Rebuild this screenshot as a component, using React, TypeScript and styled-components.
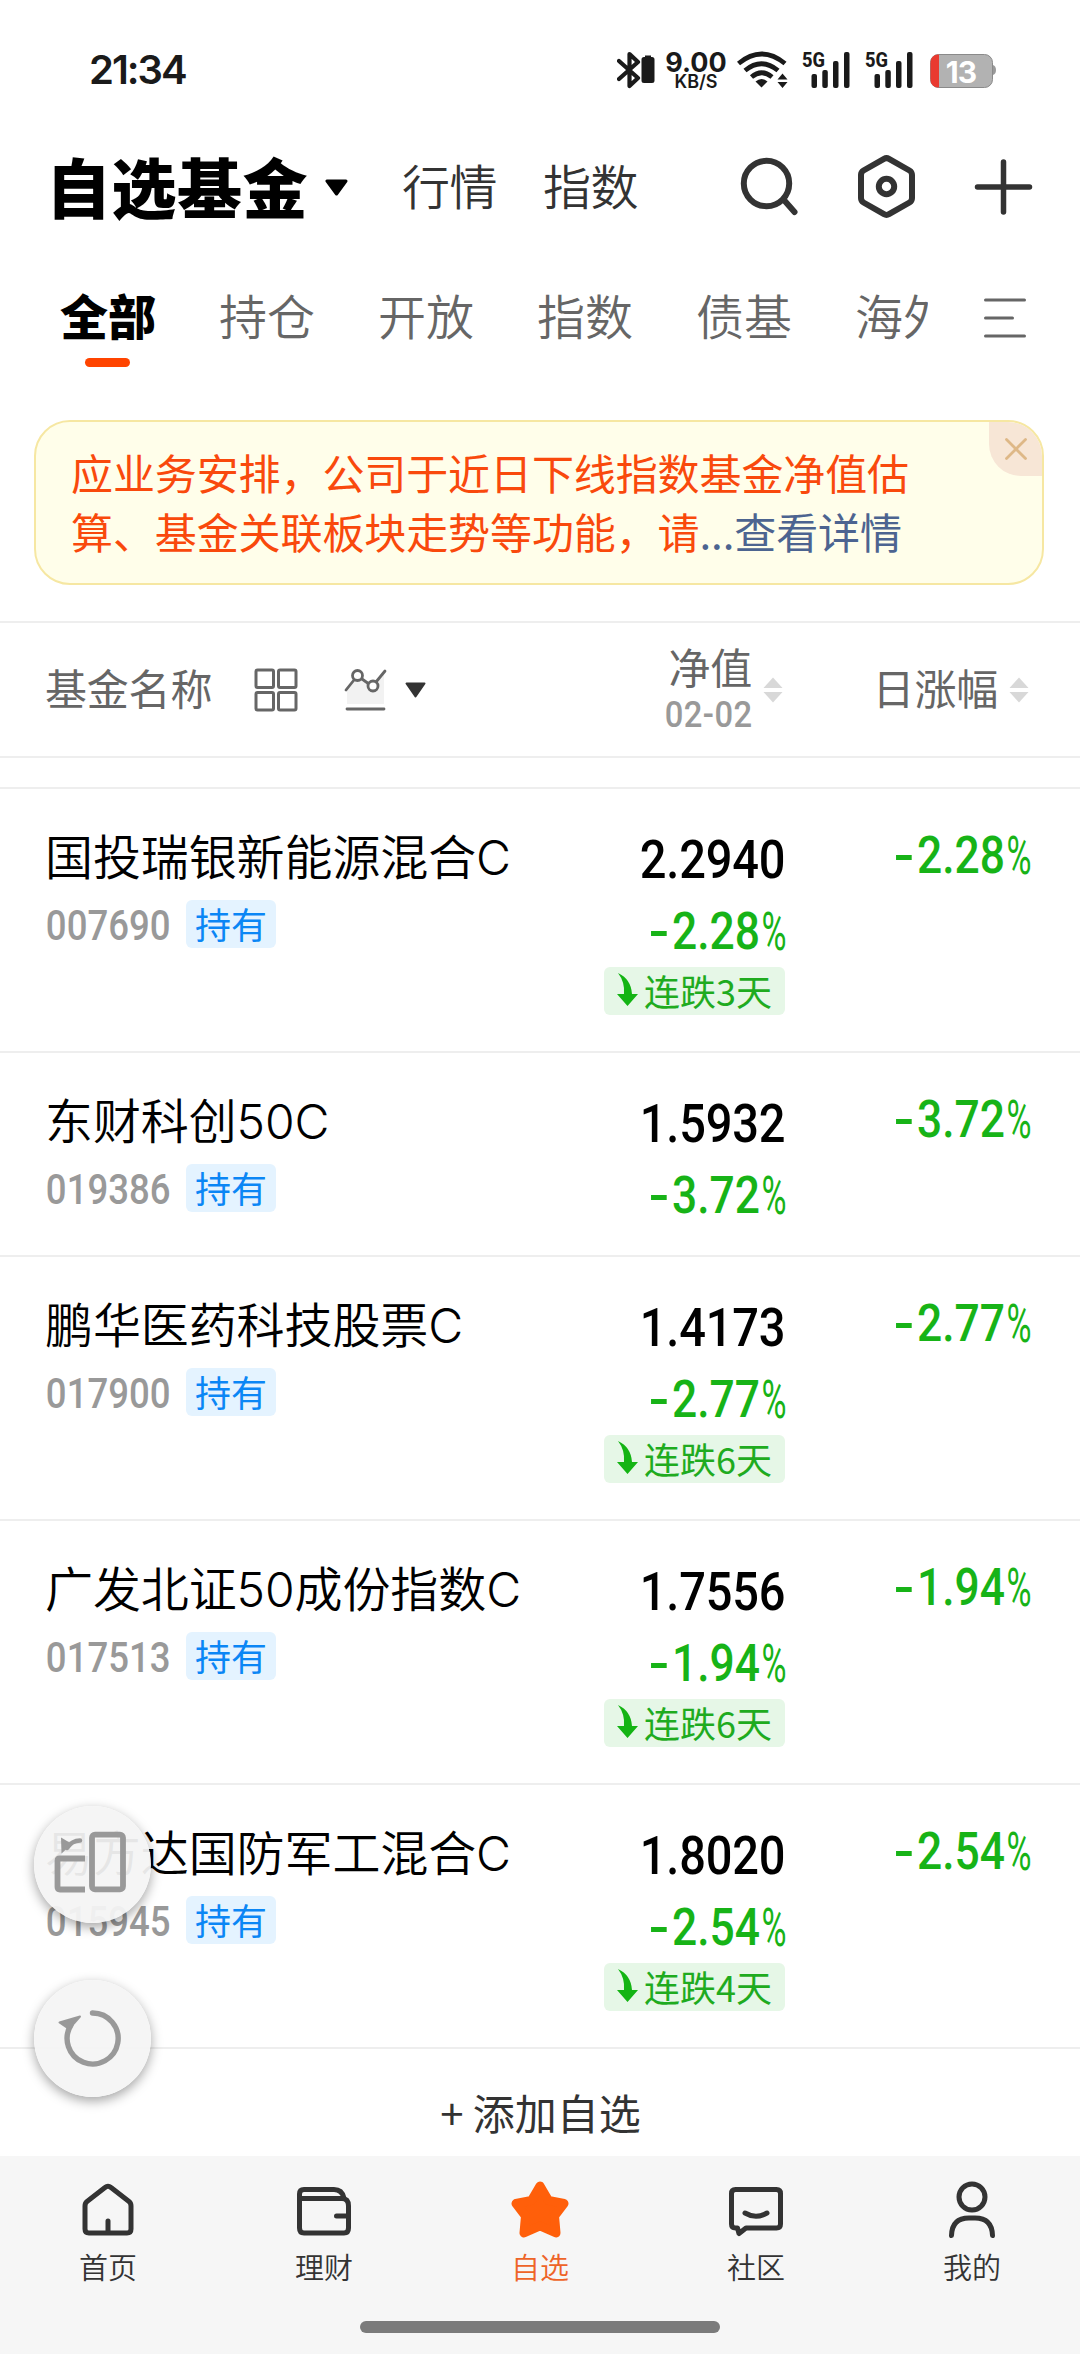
import React from "react";
import styled, { createGlobalStyle, css } from "styled-components";

const CJK = `"Noto Sans CJK SC", sans-serif`;
const NUM = `Roboto, "Liberation Sans", sans-serif`;

const Global = createGlobalStyle`
  * { box-sizing: border-box; }
  html, body { margin: 0; padding: 0; background: #fff; }
  body { font-family: ${CJK}; color: #000; overflow: hidden; }
`;

const Page = styled.div`
  width: 1080px;
  height: 2354px;
  display: flex;
  flex-direction: column;
  background: #fff;
  position: relative;
  overflow: hidden;
`;

const StatusBar = styled.div`
  height: 140px;
  flex: none;
  display: flex;
  justify-content: space-between;
  padding: 50px 84px 0 89px;
`;
const Clock = styled.div`
  font: 600 40px/40px Inter, sans-serif;
  letter-spacing: -2px;
  color: #1a1a1a;
`;
const StatusIcons = styled.div`
  display: flex;
  height: 40px;
  align-items: center;
`;
const Speed = styled.div`
  width: 60px;
  margin: 2px 11px 0 11px;
  display: flex;
  flex-direction: column;
  align-items: center;
  font-family: Inter, sans-serif;
  color: #1a1a1a;
`;
const SpeedValue = styled.span`
  font-size: 27px;
  font-weight: 700;
  line-height: 21px;
`;
const SpeedUnit = styled.span`
  font-size: 18px;
  font-weight: 600;
  line-height: 18px;
`;

const TitleBar = styled.div`
  height: 94px;
  flex: none;
  display: flex;
  align-items: center;
  padding: 0 46px 0 46px;
`;
const Title = styled.div`
  font-size: 65px;
  line-height: 90px;
  font-weight: 800;
  letter-spacing: 0.5px;
  width: 279px;
  padding-bottom: 4px;
  white-space: nowrap;
`;
const TitleArrow = styled.svg`
  margin-right: 54px;
`;
const TitleLink = styled.div`
  font-size: 48px;
  line-height: 72px;
  font-weight: 350;
  letter-spacing: -0.4px;
  padding-bottom: 6px;
  color: #333;
  width: 141px;
  white-space: nowrap;
`;
const TitleIcons = styled.div`
  margin-left: auto;
  display: flex;
  gap: 57px;
`;

const TabRow = styled.div`
  height: 160px;
  flex: none;
  display: flex;
  padding: 44px 54px 0 60px;
`;
const TabStrip = styled.div`
  width: 868px;
  overflow: hidden;
  display: flex;
  gap: 63px;
`;
const Tab = styled.div<{ $active?: boolean }>`
  flex: none;
  width: 96px;
  display: flex;
  flex-direction: column;
  align-items: center;
  font-size: 48px;
  line-height: 72px;
  white-space: nowrap;
  color: ${(p) => (p.$active ? "#000" : "#666")};
  font-weight: ${(p) => (p.$active ? 800 : 350)};
  &::after {
    content: "";
    width: 45px;
    height: 9px;
    margin: 8px 1px 0 0;
    border-radius: 5px;
    background: ${(p) => (p.$active ? "#ff4400" : "transparent")};
  }
`;
const MenuButton = styled.div`
  margin: 20px 0 0 auto;
`;

const Notice = styled.div`
  flex: none;
  margin: 26px 36px 0 34px;
  height: 165px;
  border: 2px solid #f6e7a2;
  border-radius: 36px;
  background: #fffeea;
  position: relative;
  overflow: hidden;
  padding: 21px 0 0 35px;
  color: #f9490c;
  font-size: 42px;
  line-height: 58.5px;
  letter-spacing: -0.1px;
  white-space: nowrap;
`;
const NoticeLink = styled.span`
  color: #4c6490;
`;
const NoticeClose = styled.div`
  position: absolute;
  right: 0;
  top: 0;
  width: 53px;
  height: 54px;
  border-bottom-left-radius: 32px;
  background: #f7e6d6;
  display: flex;
  align-items: center;
  justify-content: center;
`;

const TableHead = styled.div`
  flex: none;
  margin-top: 36px;
  height: 137px;
  border-top: 2px solid #eee;
  border-bottom: 2px solid #eee;
  display: flex;
  align-items: center;
  padding: 0 51px 0 45px;
  color: #666;
  font-size: 42px;
  line-height: 46px;
  letter-spacing: -0.2px;
`;
const HeadName = styled.div`
  width: 209px;
  padding-bottom: 5px;
`;
const HeadChart = styled.div`
  margin: 0 18px 0 45px;
  display: flex;
`;
const HeadNav = styled.div`
  margin-left: auto;
  width: 130px;
  display: flex;
  flex-direction: column;
  align-items: flex-end;
  padding-bottom: 4px;
`;
const HeadChange = styled.div`
  margin-left: 85px;
  width: 130px;
  text-align: right;
  padding-bottom: 5px;
`;
const SortWrap = styled.div`
  display: flex;
  margin-left: 11px;
`;

const Spacer = styled.div`
  flex: none;
  height: 31px;
  border-bottom: 2px solid #eee;
`;

const Row = styled.div<{ $tall: boolean }>`
  flex: none;
  height: ${(p) => (p.$tall ? 264 : 204)}px;
  border-bottom: 2px solid #eee;
  display: grid;
  grid-template-columns: 1fr 245px 245px;
  padding: 0 50px 0 45px;
`;
const NameCell = styled.div`
  padding-top: 33px;
`;
const FundName = styled.div`
  font-family: Inter, ${CJK};
  font-size: 48px;
  line-height: 72px;
  letter-spacing: -0.1px;
  font-weight: 350;
  white-space: nowrap;
`;
const Meta = styled.div`
  display: flex;
  align-items: center;
  margin-top: 6px;
  height: 48px;
`;
const tag = css`
  height: 48px;
  border-radius: 6px;
  font-size: 36px;
  line-height: 46px;
  white-space: nowrap;
`;
const Held = styled.div`
  ${tag}
  width: 90px;
  text-align: center;
  background: #e4f3ff;
  color: #0b86f5;
`;
const ValueCell = styled.div`
  display: flex;
  flex-direction: column;
  align-items: flex-end;
  padding-top: 42px;
`;
const ChangeCell = styled.div`
  display: flex;
  flex-direction: column;
  align-items: flex-end;
  padding-top: 40px;
`;
const Code = styled.div`
  width: 141px;
  font: 500 42px/48px ${NUM};
  color: #999;
  transform: scaleX(0.87);
  transform-origin: left;
  padding: 3px 0 0 1px;
`;
const HeadDate = styled.div`
  font: 500 36px/36px ${NUM};
  letter-spacing: 0.5px;
  color: #999;
  margin: 8px -1px 0 0;
  transform: scaleX(0.91);
  transform-origin: right;
`;
const NavValue = styled.div`
  font: 500 54px/58px ${NUM};
  color: #000;
  letter-spacing: -0.2px;
  margin-bottom: 16px;
  transform: scaleX(0.87);
  transform-origin: right;
`;
const Percent = styled.div`
  display: flex;
  font: 500 51px/54px ${NUM};
  color: #17b317;
  transform: scaleX(0.87);
  transform-origin: right;
`;
const Sign = styled.span`
  width: 18px;
  height: 5px;
  background: #17b317;
  align-self: center;
  margin: 2px 6px 0 0;
`;
const PercentMark = styled.span`
  font-weight: 400;
  width: 27px;
  margin-left: 2px;
`;
const PercentGlyph = styled.span`
  display: inline-block;
  transform: scale(0.77, 1.04);
  transform-origin: left;
`;
const Streak = styled.div`
  ${tag}
  width: 181px;
  margin-top: 8px;
  background: #e6f7e7;
  color: #1fab1f;
  display: flex;
  align-items: center;
  padding: 0 0 2px 12px;
  gap: 5px;
`;

const AddRow = styled.div`
  flex: 1;
  text-align: center;
  color: #333;
  font-size: 42px;
  line-height: 62px;
  padding: 32px 0 0 1px;
`;

const BottomBar = styled.div`
  flex: none;
  height: 198px;
  background: #f6f6f6;
  display: flex;
  flex-direction: column;
  align-items: center;
`;
const NavItems = styled.div`
  width: 100%;
  height: 165px;
  display: grid;
  grid-template-columns: repeat(5, 1fr);
`;
const NavItem = styled.div<{ $active?: boolean }>`
  display: flex;
  flex-direction: column;
  align-items: center;
  padding-top: 22px;
  font-size: 29px;
  line-height: 40px;
  font-weight: 350;
  color: ${(p) => (p.$active ? "#ee6428" : "#333")};
  svg { margin-bottom: 6px; }
`;
const HomeIndicator = styled.div`
  width: 360px;
  height: 12px;
  border-radius: 6px;
  background: #7b7b7b;
`;

const Floating = styled.div`
  position: absolute;
  left: 34px;
  top: 1806px;
  display: flex;
  flex-direction: column;
  gap: 57px;
`;
const FloatButton = styled.div`
  width: 117px;
  height: 117px;
  border-radius: 50%;
  background: rgba(244, 244, 244, 0.94);
  box-shadow: 0 4px 12px rgba(0, 0, 0, 0.36);
`;

const SignalIcon = () => (
  <svg width="63" height="40" viewBox="0 0 63 40">
    <text x="0" y="16.500" fontFamily="Roboto, sans-serif" fontSize="21" fontWeight="800" fill="#1a1a1a" textLength="23" lengthAdjust="spacingAndGlyphs">5G</text>
    <g fill="#1a1a1a">
      <rect x="9.500" y="24" width="5.500" height="14" rx="2" />
      <rect x="20.300" y="20" width="5.500" height="18" rx="2" />
      <rect x="31" y="11" width="5.500" height="27" rx="2" />
      <rect x="42" y="2" width="5.500" height="36" rx="2" />
    </g>
  </svg>
);

const Sort = () => (
  <SortWrap>
    <svg width="20" height="26" viewBox="0 0 20 26" fill="#d8d8d8">
      <path d="M10 0.500 19.500 11H0.500Z" />
      <path d="M10 25.500 19.500 15H0.500Z" />
    </svg>
  </SortWrap>
);

const Change = ({ value }: { value: string }) => (
  <Percent>
    <Sign />
    {value}
    <PercentMark><PercentGlyph>%</PercentGlyph></PercentMark>
  </Percent>
);

const funds = [
  { name: "国投瑞银新能源混合C", code: "007690", nav: "2.2940", pct: "2.28", days: 3 },
  { name: "东财科创50C", code: "019386", nav: "1.5932", pct: "3.72", days: 0 },
  { name: "鹏华医药科技股票C", code: "017900", nav: "1.4173", pct: "2.77", days: 6 },
  { name: "广发北证50成份指数C", code: "017513", nav: "1.7556", pct: "1.94", days: 6 },
  { name: "易方达国防军工混合C", code: "015945", nav: "1.8020", pct: "2.54", days: 4 },
];

const line = { fill: "none", stroke: "#333", strokeWidth: 5, strokeLinecap: "round", strokeLinejoin: "round" } as const;

export default function App() {
  return (
    <Page>
      <Global />
      <StatusBar>
        <Clock>21:34</Clock>
        <StatusIcons>
          <svg width="38" height="40" viewBox="0 0 38 40">
            <path d="M2 11 21 28 12.500 36V4L21 12 2 29" fill="none" stroke="#1a1a1a" strokeWidth="4.200" strokeLinecap="round" strokeLinejoin="round" />
            <path d="M28 7V5.500h6V7h1a2.500 2.500 0 0 1 2.500 2.500v21A2.500 2.500 0 0 1 35 33h-8a2.500 2.500 0 0 1-2.500-2.500v-21A2.500 2.500 0 0 1 27 7Z" fill="#1a1a1a" />
          </svg>
          <Speed>
            <SpeedValue>9.00</SpeedValue>
            <SpeedUnit>KB/S</SpeedUnit>
          </Speed>
          <svg width="65" height="40" viewBox="0 0 65 40">
            <g fill="none" stroke="#1a1a1a" strokeWidth="4.800">
              <path d="M1.500 13.500Q24.500-5.500 48 13.500" />
              <path d="M8 20.500Q24.500 7 41 20.500" />
              <path d="M14.500 27Q24.500 18.500 35 27" />
            </g>
            <path d="M18.500 31.500Q24.500 26.500 30.500 31.500L24.500 37.500Z" fill="#1a1a1a" />
            <path d="M45.500 23.500 50.500 29.500H40.500ZM45.500 38 50.500 32H40.500Z" fill="#1a1a1a" />
          </svg>
          <SignalIcon />
          <SignalIcon />
          <svg width="68" height="40" viewBox="0 0 68 40">
            <path d="M65 15q3 1 3 5t-3 5Z" fill="#999" />
            <rect x="2.500" y="4.500" width="62" height="33" rx="8" fill="#b2b2b2" stroke="#8a8a8a" />
            <path d="M11 4.500H10A7.500 7.500 0 0 0 2.500 12V30A7.500 7.500 0 0 0 10 37.500H11Z" fill="#e93a30" />
            <text x="33" y="32.500" textAnchor="middle" fontFamily="Inter, sans-serif" fontSize="30" fontWeight="700" fill="#fff" letterSpacing="-1">13</text>
          </svg>
        </StatusIcons>
      </StatusBar>

      <TitleBar>
        <Title>自选基金</Title>
        <TitleArrow width="23" height="17" viewBox="0 0 23 17"><path d="M2 2H21L11.500 15Z" fill="#000" stroke="#000" strokeWidth="3" strokeLinejoin="round" /></TitleArrow>
        <TitleLink>行情</TitleLink>
        <TitleLink>指数</TitleLink>
        <TitleIcons>
          <svg width="60" height="66" viewBox="0 0 60 66" {...line} strokeWidth={6}>
            <circle cx="26.500" cy="29.500" r="22.700" />
            <path d="M43.500 45.500 54.500 58" />
          </svg>
          <svg width="60" height="66" viewBox="0 0 60 66" {...line} strokeWidth={6}>
            <path d="M27 4.800Q29.500 3.400 32 4.800L52.500 16.500Q55 18 55 21V44Q55 47 52.500 48.500L32 60.200Q29.500 61.600 27 60.200L6.500 48.500Q4 47 4 44V21Q4 18 6.500 16.500Z" />
            <circle cx="29.500" cy="32.500" r="7.700" />
          </svg>
          <svg width="60" height="66" viewBox="0 0 60 66" {...line} strokeWidth={5.500}>
            <path d="M29.500 8V58M3.500 33H55.500" />
          </svg>
        </TitleIcons>
      </TitleBar>

      <TabRow>
        <TabStrip>
          <Tab $active>全部</Tab>
          <Tab>持仓</Tab>
          <Tab>开放</Tab>
          <Tab>指数</Tab>
          <Tab>债基</Tab>
          <Tab>海外</Tab>
        </TabStrip>
        <MenuButton>
          <svg width="42" height="40" viewBox="0 0 42 40" {...line} stroke="#666" strokeWidth={3}>
            <path d="M1.500 2H40.500M1.500 20H28.500M1.500 38H40.500" />
          </svg>
        </MenuButton>
      </TabRow>

      <Notice>
        应业务安排，公司于近日下线指数基金净值估
        <br />
        算、基金关联板块走势等功能，请<NoticeLink>...查看详情</NoticeLink>
        <NoticeClose>
          <svg width="22" height="22" viewBox="0 0 22 22"><path d="M1.500 1.500 20.500 20.500M20.500 1.500 1.500 20.500" stroke="#deb887" strokeWidth="2.800" strokeLinecap="round" /></svg>
        </NoticeClose>
      </Notice>

      <TableHead>
        <HeadName>基金名称</HeadName>
        <svg width="44" height="44" viewBox="0 0 44 44" {...line} stroke="#666" strokeWidth={3}>
          <rect x="2" y="2" width="17.500" height="17.500" rx="1.500" />
          <rect x="24.500" y="2" width="17.500" height="17.500" rx="1.500" />
          <rect x="2" y="24.500" width="17.500" height="17.500" rx="1.500" />
          <rect x="24.500" y="24.500" width="17.500" height="17.500" rx="1.500" />
        </svg>
        <HeadChart>
          <svg width="44" height="44" viewBox="0 0 44 44" {...line} stroke="#666" strokeWidth={2.800}>
            <path d="M4 20 14 8 29 19 41 6V36H4Z" fill="#f2f2f2" stroke="none" />
            <path d="M3 22 11 12M19 11 26 16M33 14 42 3" />
            <circle cx="14.500" cy="7.500" r="5" fill="#fff" />
            <circle cx="30" cy="18" r="5" fill="#fff" />
            <path d="M4 41H41" />
          </svg>
        </HeadChart>
        <svg width="21" height="16" viewBox="0 0 21 16"><path d="M1.500 1.500H19.500L10.500 14.500Z" fill="#333" stroke="#333" strokeWidth="2" strokeLinejoin="round" /></svg>
        <HeadNav>
          净值
          <HeadDate>02-02</HeadDate>
        </HeadNav>
        <Sort />
        <HeadChange>日涨幅</HeadChange>
        <Sort />
      </TableHead>
      <Spacer />

      {funds.map((f) => (
        <Row key={f.code} $tall={f.days > 0}>
          <NameCell>
            <FundName>{f.name}</FundName>
            <Meta>
              <Code>{f.code}</Code>
              <Held>持有</Held>
            </Meta>
          </NameCell>
          <ValueCell>
            <NavValue>{f.nav}</NavValue>
            <Change value={f.pct} />
            {f.days > 0 && (
              <Streak>
                <svg width="23" height="34" viewBox="0 0 23 34" fill="#14b414">
                  <path d="M2 0Q15 6 16 21H22L11.500 33 1 21H8Q9 9 2 0Z" />
                </svg>
                连跌{f.days}天
              </Streak>
            )}
          </ValueCell>
          <ChangeCell>
            <Change value={f.pct} />
          </ChangeCell>
        </Row>
      ))}

      <AddRow>+ 添加自选</AddRow>

      <BottomBar>
        <NavItems>
          <NavItem>
            <svg width="60" height="62" viewBox="0 0 60 62" {...line}>
              <path d="M27 9.500Q30 7 33 9.500L51 23.500Q53 25 53 28V51Q53 55 49 55H11Q7 55 7 51V28Q7 25 9 23.500ZM30 43V55" />
            </svg>
            首页
          </NavItem>
          <NavItem>
            <svg width="60" height="62" viewBox="0 0 60 62" {...line}>
              <path d="M5.500 20V16Q5.500 11.500 10 11.500H40Q48 11.500 50 20M5.500 20.500H48Q54.500 20.500 54.500 28V50Q54.500 55 50 55H10Q5.500 55 5.500 50ZM54 38H42.500" />
            </svg>
            理财
          </NavItem>
          <NavItem $active>
            <svg width="60" height="62" viewBox="0 0 60 62">
              <path d="M30 8 38.500 22.500 54 25.500 44.500 38 46 55 30 48 14 55 15.500 38 6 25.500 21.500 22.500Z" fill="#ff5f0a" stroke="#ff5f0a" strokeWidth="9" strokeLinejoin="round" />
            </svg>
            自选
          </NavItem>
          <NavItem>
            <svg width="60" height="62" viewBox="0 0 60 62" {...line}>
              <path d="M9.500 11.500H50.500Q54.500 11.500 54.500 15.500V46Q54.500 50 50.500 50H20L13 55.500 11.500 50H9.500Q5.500 50 5.500 46V15.500Q5.500 11.500 9.500 11.500ZM19 35Q30 41.500 41 35" />
            </svg>
            社区
          </NavItem>
          <NavItem>
            <svg width="60" height="62" viewBox="0 0 60 62" {...line}>
              <circle cx="30" cy="19" r="13" />
              <path d="M9.500 57.500Q10 40 27 40H33Q50 40 50.500 57.500" />
            </svg>
            我的
          </NavItem>
        </NavItems>
        <HomeIndicator />
      </BottomBar>

      <Floating>
        <FloatButton>
          <svg width="117" height="117" viewBox="0 0 117 117" fill="none" stroke="#999" strokeWidth="5.800">
            <path d="M51 52.500H26Q23.500 52.500 23.500 55V81Q23.500 83.500 26 83.500H51" />
            <rect x="58" y="28.700" width="31" height="54.600" rx="3" />
            <path d="M33 42Q38 34.500 46 34.500" strokeWidth="4.500" strokeLinecap="round" />
            <path d="M27 31.500 38 38 27.500 47.500Z" fill="#999" stroke="none" />
          </svg>
        </FloatButton>
        <FloatButton>
          <svg width="117" height="117" viewBox="0 0 117 117" fill="none" stroke="#999" strokeWidth="5.400" strokeLinecap="round">
            <path d="M58.500 33A25.500 25.500 0 1 1 37 45" />
            <path d="M25.500 42.500 46 36.500 35 49Z" fill="#999" stroke="#999" strokeWidth="2" strokeLinejoin="round" />
          </svg>
        </FloatButton>
      </Floating>
    </Page>
  );
}
